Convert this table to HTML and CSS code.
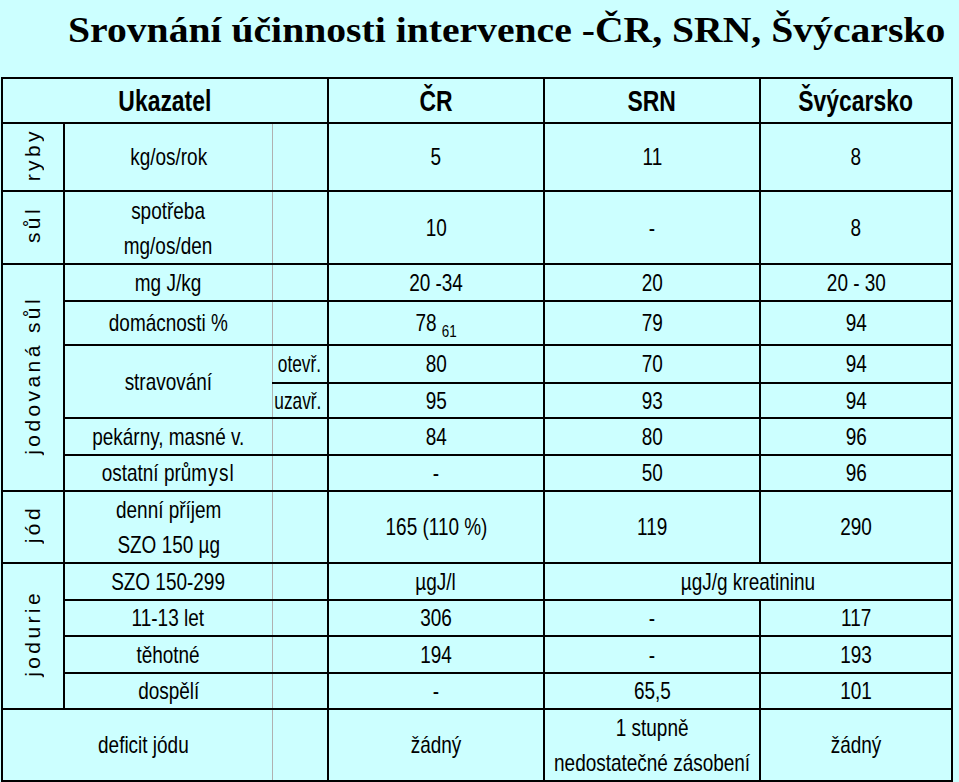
FILE: index.html
```html
<!DOCTYPE html>
<html lang="cs">
<head>
<meta charset="utf-8">
<title>Srovnání účinnosti intervence</title>
<link rel="stylesheet" href="styles.css">
</head>
<body>
<h1 class="title"><span class="title-text">Srovnání účinnosti intervence -ČR, SRN, Švýcarsko</span></h1>
<table class="grid">
  <colgroup>
    <col class="c-rot"><col class="c-lab"><col class="c-sub"><col class="c-val"><col class="c-val"><col class="c-last">
  </colgroup>
  <tr class="r-head">
    <th colspan="3"><span class="t">Ukazatel</span></th><th><span class="t">ČR</span></th><th><span class="t">SRN</span></th><th><span class="t">Švýcarsko</span></th>
  </tr>
  <tr class="r-ryby">
    <td class="rot"><span>ryby</span></td><td class="lab"><span class="t">kg/os/rok</span></td><td class="gap"></td><td><span class="t">5</span></td><td><span class="t">11</span></td><td><span class="t">8</span></td>
  </tr>
  <tr class="r-sul">
    <td class="rot"><span>sůl</span></td><td class="lab two"><span class="t">spotřeba<br>mg/os/den</span></td><td class="gap"></td><td><span class="t">10</span></td><td><span class="t">-</span></td><td><span class="t">8</span></td>
  </tr>
  <tr class="r-mgj">
    <td class="rot" rowspan="6"><span>jodovaná sůl</span></td><td class="lab"><span class="t">mg J/kg</span></td><td class="gap"></td><td><span class="t">20 -34</span></td><td><span class="t">20</span></td><td><span class="t">20 - 30</span></td>
  </tr>
  <tr class="r-dom">
    <td class="lab"><span class="t">domácnosti %</span></td><td class="gap"></td><td><span class="t">78 <sub>61</sub></span></td><td><span class="t">79</span></td><td><span class="t">94</span></td>
  </tr>
  <tr class="r-ot">
    <td class="lab" rowspan="2"><span class="t">stravování</span></td><td class="sub"><span class="t">otevř.</span></td><td><span class="t">80</span></td><td><span class="t">70</span></td><td><span class="t">94</span></td>
  </tr>
  <tr class="r-uz">
    <td class="sub"><span class="t">uzavř.</span></td><td><span class="t">95</span></td><td><span class="t">93</span></td><td><span class="t">94</span></td>
  </tr>
  <tr class="r-pek">
    <td class="lab"><span class="t">pekárny, masné v.</span></td><td class="gap"></td><td><span class="t">84</span></td><td><span class="t">80</span></td><td><span class="t">96</span></td>
  </tr>
  <tr class="r-ost">
    <td class="lab"><span class="t">ostatní prů<span class="sp">mysl</span></span></td><td class="gap"></td><td><span class="t">-</span></td><td><span class="t">50</span></td><td><span class="t">96</span></td>
  </tr>
  <tr class="r-jod">
    <td class="rot"><span>jód</span></td><td class="lab two"><span class="t">denní příjem<br>SZO 150 µg</span></td><td class="gap"></td><td><span class="t">165 (110 %)</span></td><td><span class="t">119</span></td><td><span class="t">290</span></td>
  </tr>
  <tr class="r-szo">
    <td class="rot" rowspan="4"><span>jodurie</span></td><td class="lab"><span class="t">SZO 150-299</span></td><td class="gap"></td><td><span class="t">µgJ/l</span></td><td colspan="2"><span class="t">µgJ/g kreatininu</span></td>
  </tr>
  <tr class="r-let">
    <td class="lab"><span class="t">11-13 let</span></td><td class="gap"></td><td><span class="t">306</span></td><td><span class="t">-</span></td><td><span class="t">117</span></td>
  </tr>
  <tr class="r-teh">
    <td class="lab"><span class="t">těhotné</span></td><td class="gap"></td><td><span class="t">194</span></td><td><span class="t">-</span></td><td><span class="t">193</span></td>
  </tr>
  <tr class="r-dosp">
    <td class="lab"><span class="t">dospělí</span></td><td class="gap"></td><td><span class="t">-</span></td><td><span class="t">65,5</span></td><td><span class="t">101</span></td>
  </tr>
  <tr class="r-def">
    <td class="lab deficit" colspan="2"><span class="t">deficit jódu</span></td><td class="gap"></td><td><span class="t">žádný</span></td><td class="two"><span class="t">1 stupně<br>nedostatečné zásobení</span></td><td><span class="t">žádný</span></td>
  </tr>
</table>
</body>
</html>
```
FILE: styles.css
```css
html, body {
  margin: 0;
  padding: 0;
  background: #ccffff;
}

.title {
  margin: 0 0 26px 0;
  padding: 11px 0 0 68px;
  height: 40px;
  line-height: 40px;
  font-family: "Liberation Serif", "Times New Roman", serif;
  font-weight: bold;
  font-size: 35px;
  color: #000;
  white-space: nowrap;
}

.title-text {
  display: inline-block;
  transform: scaleX(1.133);
  transform-origin: left center;
}

.grid {
  margin-left: 1px;
  width: 952px;
  table-layout: fixed;
  border-collapse: collapse;
  font-family: "Liberation Sans", Arial, sans-serif;
  font-size: 24px;
  color: #000;
}

.c-rot { width: 62px; }
.c-lab { width: 208px; }
.c-sub { width: 56px; }
.c-val { width: 216px; }
.c-last { width: 192px; }

.grid th,
.grid td {
  border: 2px solid #000;
  padding: 0;
  text-align: center;
  vertical-align: middle;
  line-height: 26px;
  white-space: nowrap;
}

.grid th {
  font-size: 29px;
  font-weight: bold;
}

.t {
  display: inline-block;
  margin: 0 -40px;
  transform: scaleX(0.79);
}

.grid td.lab {
  border-right: 1px solid #b0b0b0;
}

.grid td.gap,
.grid td.sub {
  border-left: 1px solid #b0b0b0;
}

.grid td.sub {
  text-align: right;
  padding-right: 6px;
}

.grid td.sub .t {
  margin: 0 0 0 -30px;
  transform: scaleX(0.72);
  transform-origin: right center;
}

.grid td.two {
  line-height: 35px;
}

.grid td.deficit {
  padding-left: 12px;
}

.grid sub {
  font-size: 17px;
  vertical-align: -6px;
  line-height: 0;
}

.sp {
  letter-spacing: 1.5px;
}

.rot span {
  display: inline-block;
  writing-mode: vertical-rl;
  transform: rotate(180deg);
  font-family: "Liberation Sans", Arial, sans-serif;
  font-size: 21px;
  letter-spacing: 3.4px;
  line-height: 24px;
}

.r-head { height: 45px; }
.r-ryby { height: 68px; }
.r-sul { height: 73px; }
.r-mgj { height: 37px; }
.r-dom { height: 44px; }
.r-ot { height: 38px; }
.r-uz { height: 35px; }
.r-pek { height: 37px; }
.r-ost { height: 36px; }
.r-jod { height: 72px; }
.r-szo { height: 37px; }
.r-let { height: 36px; }
.r-teh { height: 37px; }
.r-dosp { height: 36px; }
.r-def { height: 72px; }
```
